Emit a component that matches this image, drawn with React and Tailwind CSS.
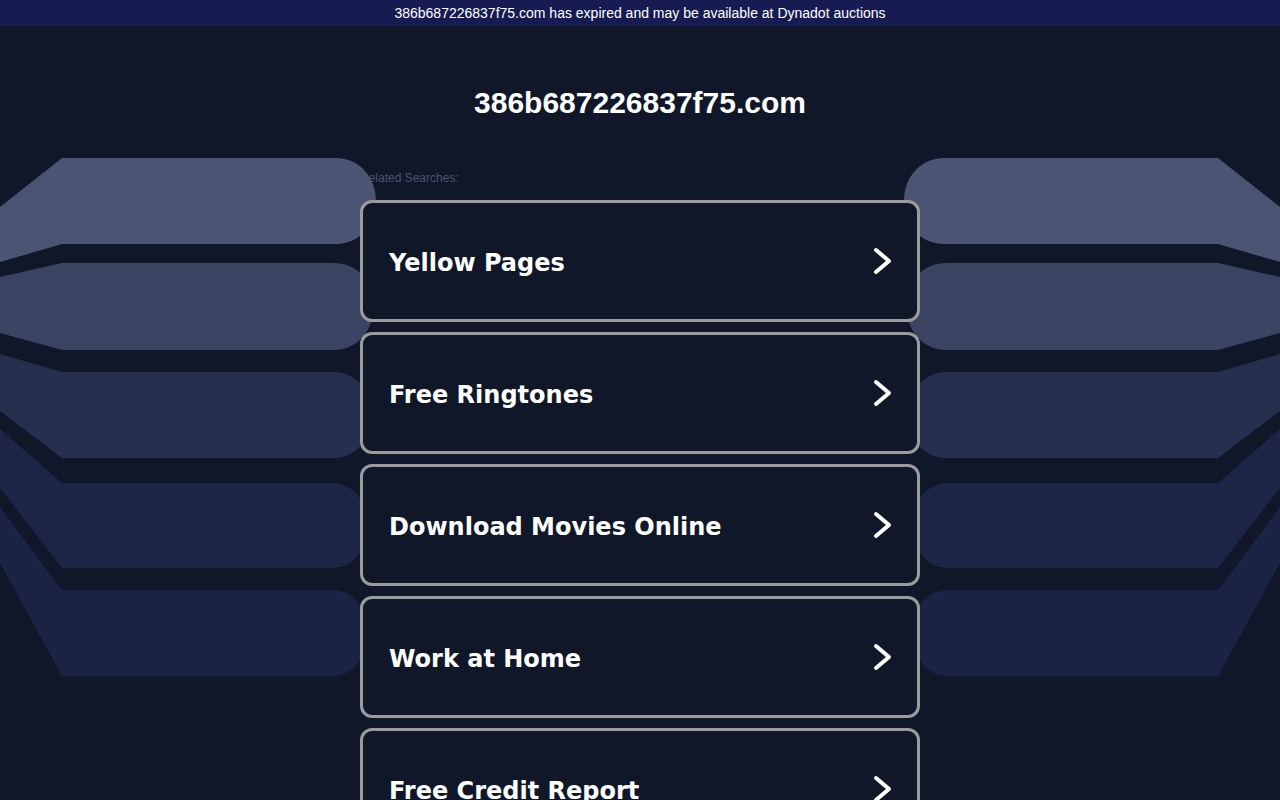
import React from 'react';

const searches = [
  'Yellow Pages',
  'Free Ringtones',
  'Download Movies Online',
  'Work at Home',
  'Free Credit Report',
];

// ribbon shapes drawn on the left, mirrored on the right
const ribbons = [
  { d: 'M0,207 L62,158 L336,158 C360,158 376,178 376,201 C376,224 360,244 336,244 L62,244 L0,262 Z', fill: '#4b5573' },
  { d: 'M0,277 L62,263 L334,263 C358,263 374,283 374,306 C374,329 358,350 334,350 L62,350 L0,333 Z', fill: '#3b4362' },
  { d: 'M0,354 L62,372 L334,372 C356,372 372,392 372,415 C372,438 356,458 334,458 L62,458 L0,411 Z', fill: '#262f4d' },
  { d: 'M0,429 L62,483 L332,483 C354,483 368,503 368,525 C368,548 354,568 332,568 L62,568 L0,488 Z', fill: '#1c2545' },
  { d: 'M0,507 L62,590 L332,590 C354,590 368,610 368,633 C368,656 354,676 332,676 L62,676 L0,563 Z', fill: '#1b2344' },
];

function Ribbons() {
  return (
    <svg
      className="absolute top-0 left-0 pointer-events-none z-10"
      width="1280"
      height="800"
      viewBox="0 0 1280 800"
    >
      <defs>
        <pattern id="dots" width="4" height="4" patternUnits="userSpaceOnUse">
          <rect x="1" y="1" width="1" height="1" fill="#2a3358" />
        </pattern>
      </defs>
      <g>
        {ribbons.map((r, i) => (
          <path key={i} d={r.d} fill={r.fill} />
        ))}
        <path d={ribbons[3].d} fill="url(#dots)" opacity="0.6" />
        <path d={ribbons[4].d} fill="url(#dots)" opacity="0.6" />
      </g>
      <g transform="translate(1280,0) scale(-1,1)">
        {ribbons.map((r, i) => (
          <path key={i} d={r.d} fill={r.fill} />
        ))}
        <path d={ribbons[3].d} fill="url(#dots)" opacity="0.6" />
        <path d={ribbons[4].d} fill="url(#dots)" opacity="0.6" />
      </g>
    </svg>
  );
}

function Chevron() {
  return (
    <svg width="22" height="30" viewBox="0 0 22 30" className="shrink-0">
      <polyline
        points="5,4 18,15 5,26"
        fill="none"
        stroke="#ffffff"
        strokeWidth="4"
        strokeLinecap="round"
        strokeLinejoin="round"
      />
    </svg>
  );
}

function App() {
  return (
    <div className="min-h-screen bg-[#101729] relative overflow-hidden" style={{ fontFamily: '"Liberation Sans", Arial, sans-serif' }}>
      <div className="h-[26px] bg-[#161b52] flex items-center justify-center text-white text-[14px]">
        386b687226837f75.com has expired and may be available at Dynadot auctions
      </div>

      <Ribbons />

      <div className="w-[560px] mx-auto">
        <h1 className="text-white font-bold text-[30px] text-center leading-none pt-[62px]">
          386b687226837f75.com
        </h1>

        <div className="text-[12px] text-[#4b5570] mt-[54px] leading-none">Related Searches:</div>

        <div className="flex flex-col gap-[10px] mt-[16px] relative z-20">
          {searches.map((s) => (
            <a
              key={s}
              href="#"
              className="h-[122px] border-[3px] border-[#9b9b9b] rounded-[12px] bg-[#101729] flex items-center justify-between pl-[26px] pr-[24px]"
            >
              <span
                className="text-white font-bold text-[24px] pt-[4px]"
                style={{ fontFamily: '"DejaVu Sans", Verdana, sans-serif' }}
              >
                {s}
              </span>
              <Chevron />
            </a>
          ))}
        </div>
      </div>
    </div>
  );
}

export default App;
